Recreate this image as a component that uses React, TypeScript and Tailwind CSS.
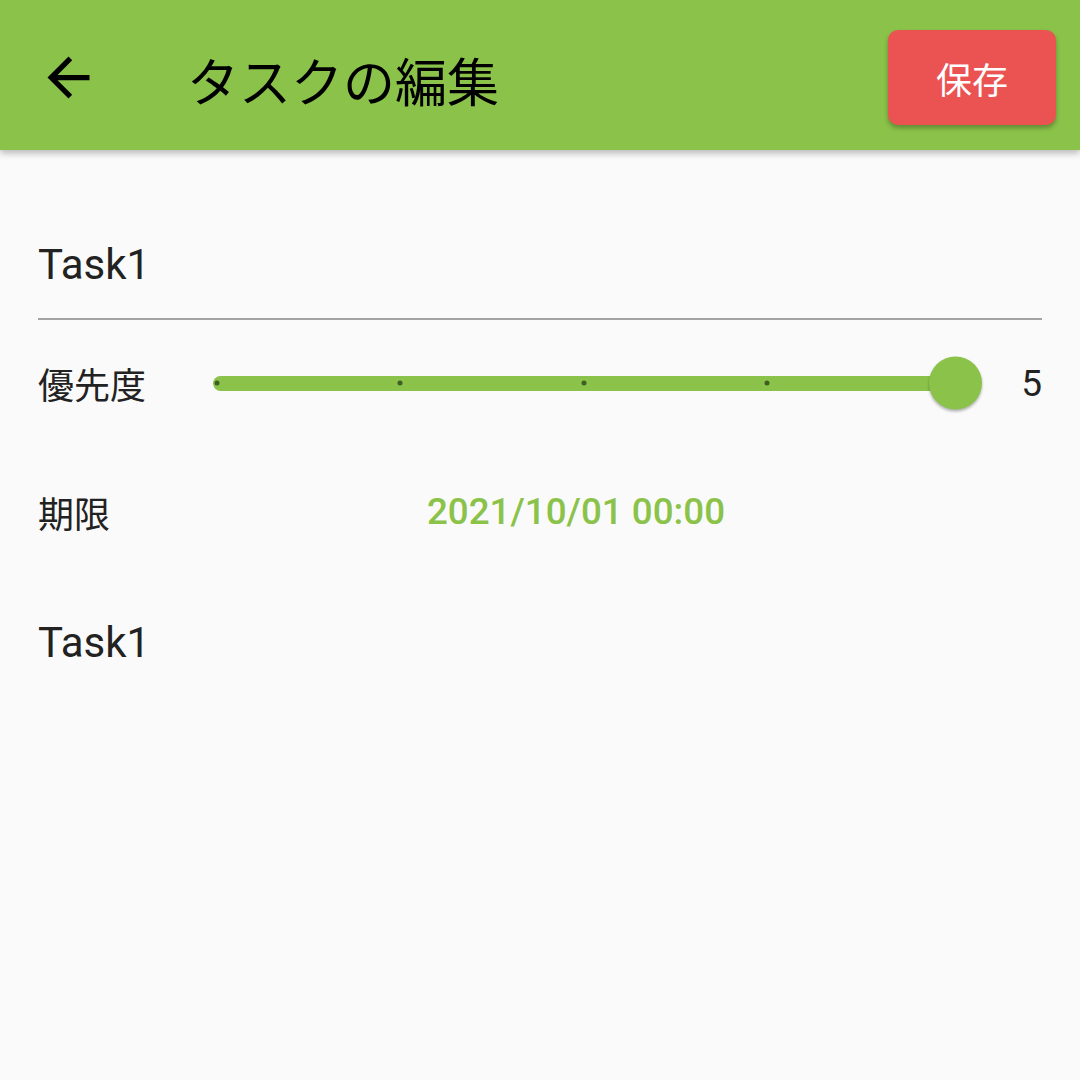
const jp = "font-['Noto_Sans_CJK_JP',sans-serif]";
const ro = "font-['Roboto','Noto_Sans_CJK_JP',sans-serif]";

function BackArrow() {
  return (
    <svg width="63" height="63" viewBox="0 0 24 24" className="text-black">
      <path fill="currentColor" d="M20 11H7.83l5.59-5.59L12 4l-8 8 8 8 1.41-1.41L7.83 13H20v-2z" />
    </svg>
  );
}

const ticks = [4, 187, 371, 554];

function PrioritySlider() {
  return (
    <div className="relative w-[744px] h-[56px] flex items-center">
      <div className="w-full h-[15px] rounded-full bg-[#8bc34a]" />
      {ticks.map((x) => (
        <span
          key={x}
          className="absolute top-1/2 -translate-y-1/2 -translate-x-1/2 w-[5px] h-[5px] rounded-full bg-[#3f5e22]"
          style={{ left: x }}
        />
      ))}
      <span className="absolute top-1/2 -translate-y-1/2 left-[716px] w-[53px] h-[53px] rounded-full bg-[#8bc34a] shadow-[0_2px_3px_rgba(0,0,0,0.3)]" />
    </div>
  );
}

export default function App() {
  return (
    <div className="w-[1080px] h-[1080px] bg-[#fafafa] overflow-hidden">
      <header className="relative z-10 h-[150px] bg-[#8bc34a] flex items-center shadow-[0_3px_7px_rgba(0,0,0,0.28)]">
        <div className="w-[140px] flex justify-center -ml-[2px] mt-[4px]">
          <BackArrow />
        </div>
        <h1 className={`${jp} ml-[49px] text-[52px] leading-none text-black mt-[9px]`}>タスクの編集</h1>
        <button
          className={`${jp} ml-auto mr-[24px] mt-[5px] w-[168px] h-[95px] rounded-[10px] bg-[#eb5353] text-white text-[36px] leading-none shadow-[0_3px_5px_rgba(0,0,0,0.3)]`}
        >
          保存
        </button>
      </header>

      <main className="px-[38px] text-[#222222]">
        <div className={`${ro} pt-[90px] pb-[28px] text-[42px] leading-[50px] border-b-2 border-[#a3a3a3]`}>Task1</div>

        <div className="flex items-center h-[86px] mt-[20px]">
          <span className={`${jp} w-[175px] text-[36px] leading-none`}>優先度</span>
          <PrioritySlider />
          <span className={`${ro} flex-1 text-right text-[37px] leading-none`}>5</span>
        </div>

        <div className="flex items-center h-[80px] mt-[46px]">
          <span className={`${jp} w-[72px] text-[36px] leading-none`}>期限</span>
          <span className={`${ro} flex-1 text-center font-medium text-[36.75px] leading-none text-[#8bc34a]`}>
            2021/10/01 00:00
          </span>
        </div>

        <div className={`${ro} mt-[66px] text-[42px] leading-[50px]`}>Task1</div>
      </main>
    </div>
  );
}
